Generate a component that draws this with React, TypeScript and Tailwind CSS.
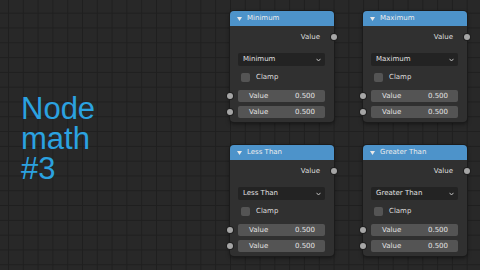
function Socket({ side }: { side: "left" | "right" }) {
  return (
    <span
      className={
        "absolute top-1/2 -translate-y-1/2 w-[6px] h-[6px] rounded-full bg-[#a6a6a6] shadow-[0_0_0_1px_#1e1e1e] " +
        (side === "left" ? "left-[-11px]" : "right-[-12px]")
      }
    />
  );
}

function Field() {
  return (
    <div className="relative flex items-center justify-between h-[12px] rounded-[2px] bg-[#545454] pl-[11px] pr-[10px] text-[#e2e2e2]">
      <span>Value</span>
      <span>0.500</span>
      <Socket side="left" />
    </div>
  );
}

function Node({ title }: { title: string }) {
  return (
    <div className="w-[104px] h-[111px] rounded-[4px] bg-[#303030] shadow-[0_0_0_1px_#1b1b1b,0_2px_4px_rgba(0,0,0,0.5)] text-[7px] leading-none font-['DejaVu_Sans',sans-serif]">
      <div className="flex items-center h-[15px] rounded-t-[4px] bg-[#4d93ca] pl-[7px] text-[#ececec]">
        <svg width="5" height="4" viewBox="0 0 5 4">
          <polygon points="0,0 5,0 2.5,4" fill="#e8e8e8" />
        </svg>
        <span className="ml-[5px]">{title}</span>
      </div>
      <div className="flex flex-col pl-[8px] pr-[9px]">
        <div className="relative flex items-center justify-end h-[22px] pr-[5px] text-[#dedede]">
          Value
          <Socket side="right" />
        </div>
        <div className="flex items-center justify-between mt-[5px] h-[13px] rounded-[2px] bg-[#232323] pl-[5px] pr-[4px] text-[#e0e0e0]">
          <span>{title}</span>
          <svg width="5" height="4" viewBox="0 0 5 4">
            <polyline points="0.5,0.8 2.5,3 4.5,0.8" fill="none" stroke="#cfcfcf" strokeWidth="0.9" />
          </svg>
        </div>
        <div className="flex items-center mt-[7px] h-[9px] pl-[3px] text-[#dedede]">
          <span className="w-[9px] h-[9px] rounded-[2px] bg-[#545454]" />
          <span className="ml-[6px]">Clamp</span>
        </div>
        <div className="mt-[8px]">
          <Field />
        </div>
        <div className="mt-[4px]">
          <Field />
        </div>
      </div>
    </div>
  );
}

export default function App() {
  return (
    <div className="flex w-[480px] h-[270px] overflow-hidden bg-[#282828] bg-[linear-gradient(to_right,#1f1f1f_1px,transparent_1px),linear-gradient(to_bottom,#1f1f1f_1px,transparent_1px)] bg-[size:14.8px_14.8px] bg-[position:8px_12.7px]">
      <div className="w-[230px] pl-[21px] pt-[94px]">
        <h1 className="text-[31px] leading-[30px] text-[#2ba2e0] font-['Liberation_Sans',Arial,sans-serif]">
          <span className="block h-[30px]">Node</span>
          <span className="block h-[30px]">math</span>
          <span className="block h-[30px]">#3</span>
        </h1>
      </div>
      <div className="grid grid-cols-[104px_104px] gap-x-[29px] gap-y-[23px] pt-[11px] content-start">
        <Node title="Minimum" />
        <Node title="Maximum" />
        <Node title="Less Than" />
        <Node title="Greater Than" />
      </div>
    </div>
  );
}
